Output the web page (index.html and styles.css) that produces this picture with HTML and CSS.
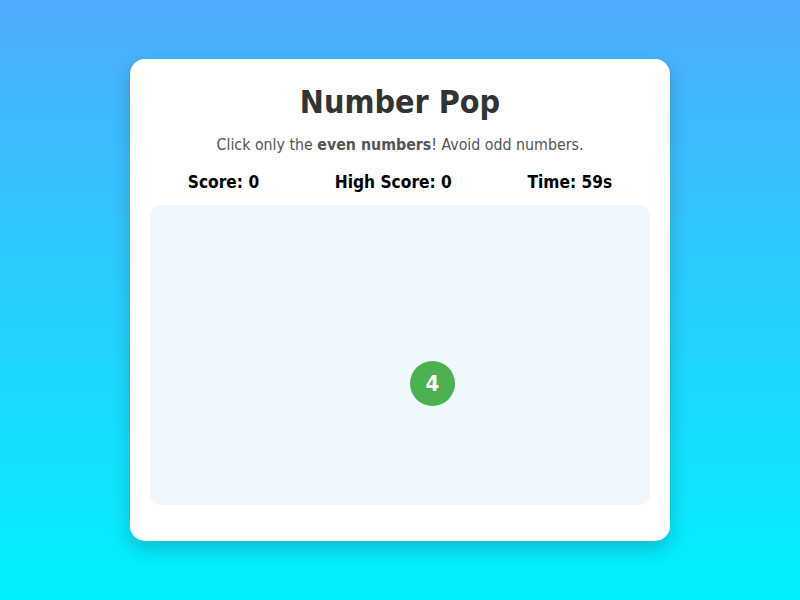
FILE: index.html
```html
<!DOCTYPE html>
<html>
<head>
<meta charset="utf-8">
<link rel="stylesheet" href="styles.css">
</head>
<body>
<div class="card">
  <h1 class="title">Number Pop</h1>
  <p class="hint">Click only the <strong>even numbers</strong>! Avoid odd numbers.</p>
  <div class="stats">
    <span>Score: 0</span>
    <span>High Score: 0</span>
    <span>Time: 59s</span>
  </div>
  <div class="area">
    <div class="bubble" style="left:260px;top:156px;">4</div>
  </div>
</div>
</body>
</html>
```
FILE: styles.css
```css
html, body {
  margin: 0;
  height: 100%;
}
body {
  background: linear-gradient(to bottom, #4facfe, #00f2fe);
  font-family: "DejaVu Sans Condensed", "DejaVu Sans", sans-serif;
  display: flex;
  align-items: center;
  justify-content: center;
}
.card {
  width: 500px;
  height: 442px;
  padding: 20px;
  background: #fff;
  border-radius: 15px;
  box-shadow: 0 8px 20px rgba(0, 0, 0, 0.2);
  display: flex;
  flex-direction: column;
  align-items: stretch;
}
.title {
  margin: 0;
  margin-top: 2px;
  text-align: center;
  font-size: 32px;
  color: #333;
  line-height: 42px;
}
.hint {
  margin: 12px 0 0;
  text-align: center;
  color: #555;
  font-size: 15.8px;
  line-height: 20px;
}
.stats {
  margin-top: 16px;
  display: flex;
  justify-content: space-around;
  font-weight: bold;
  font-size: 17.2px;
  line-height: 22px;
}
.area {
  position: relative;
  margin-top: 12px;
  height: 300px;
  background: #f0f8ff;
  border-radius: 10px;
}
.bubble {
  position: absolute;
  width: 45px;
  height: 45px;
  border-radius: 50%;
  background: #4caf50;
  color: #fff;
  font-weight: bold;
  font-size: 22px;
  display: flex;
  align-items: center;
  justify-content: center;
}
```
